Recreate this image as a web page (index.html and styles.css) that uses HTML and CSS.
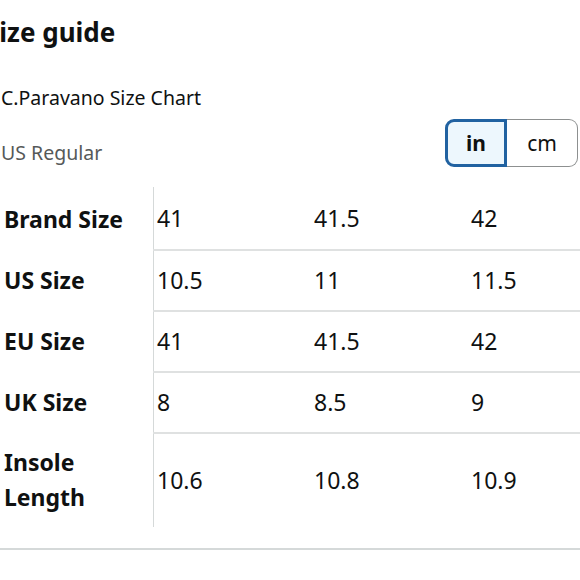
FILE: index.html
```html
<!DOCTYPE html>
<html lang="en">
<head>
<meta charset="utf-8">
<title>Size guide</title>
<link rel="stylesheet" href="styles.css">
</head>
<body>
<main class="page">
  <h2 class="title">Size guide</h2>
  <p class="subtitle">C.Paravano Size Chart</p>
  <div class="controls">
    <span class="region">US Regular</span>
    <div class="toggle">
      <button class="seg seg-active">in</button>
      <button class="seg seg-off">cm</button>
    </div>
  </div>
  <div class="chart">
    <table class="sizes">
      <tbody>
        <tr><th>Brand Size</th><td>41</td><td>41.5</td><td class="last">42</td></tr>
        <tr><th>US Size</th><td>10.5</td><td>11</td><td class="last">11.5</td></tr>
        <tr><th>EU Size</th><td>41</td><td>41.5</td><td class="last">42</td></tr>
        <tr><th>UK Size</th><td>8</td><td>8.5</td><td class="last">9</td></tr>
        <tr><th>Insole Length</th><td>10.6</td><td>10.8</td><td class="last">10.9</td></tr>
      </tbody>
    </table>
  </div>
  <div class="rule"></div>
</main>
</body>
</html>
```

FILE: styles.css
```css
html, body {
  margin: 0;
  padding: 0;
  background: #ffffff;
  overflow: hidden;
}

body {
  font-family: "Noto Sans", "Open Sans", sans-serif;
  color: #0f1111;
}

.page {
  width: 580px;
  padding-top: 16px;
}

.title {
  margin: 0 0 0 -15px;
  font-size: 26px;
  line-height: 32px;
  font-weight: 700;
}

.subtitle {
  margin: 38px 0 0 1px;
  font-size: 19.5px;
  line-height: 24px;
}

.controls {
  margin-top: 9px;
  height: 48px;
  display: flex;
  justify-content: space-between;
  align-items: flex-end;
}

.region {
  margin: 0 0 2px 1px;
  font-size: 19.5px;
  line-height: 24px;
  color: #565959;
}

.toggle {
  display: flex;
  height: 48px;
  margin-right: 2px;
}

.seg {
  font-family: inherit;
  font-size: 21px;
  color: #0f1111;
  margin: 0;
  padding: 0;
  height: 48px;
  box-sizing: border-box;
}

.seg-active {
  width: 62px;
  font-weight: 700;
  background: #edf7fd;
  border: 3px solid #2162a1;
  border-radius: 9px 0 0 9px;
}

.seg-off {
  width: 71px;
  background: #ffffff;
  border: 1px solid #8d9090;
  border-left: none;
  border-radius: 0 9px 9px 0;
}

.chart {
  margin-top: 20px;
  width: 580px;
}

.sizes {
  border-collapse: collapse;
  table-layout: fixed;
  width: 580px;
}

.sizes th,
.sizes td {
  font-size: 23px;
  line-height: 35px;
  vertical-align: middle;
  text-align: left;
  padding-top: 12px;
  padding-bottom: 12px;
}

.sizes th {
  width: 124px;
  padding-left: 4px;
  padding-right: 25px;
  font-weight: 700;
  border-right: 1px solid #d5d9d9;
}

.sizes td {
  width: 154px;
  padding-left: 3px;
  padding-right: 0;
  font-weight: 400;
}

.sizes td.last {
  width: auto;
}

.sizes tr + tr td {
  border-top: 2px solid #dfe1e1;
}

.sizes tr:first-child th,
.sizes tr:first-child td {
  padding-top: 14px;
  padding-bottom: 13px;
}

.rule {
  margin-top: 21px;
  height: 0;
  border-top: 2px solid #d5d9d9;
}
```
